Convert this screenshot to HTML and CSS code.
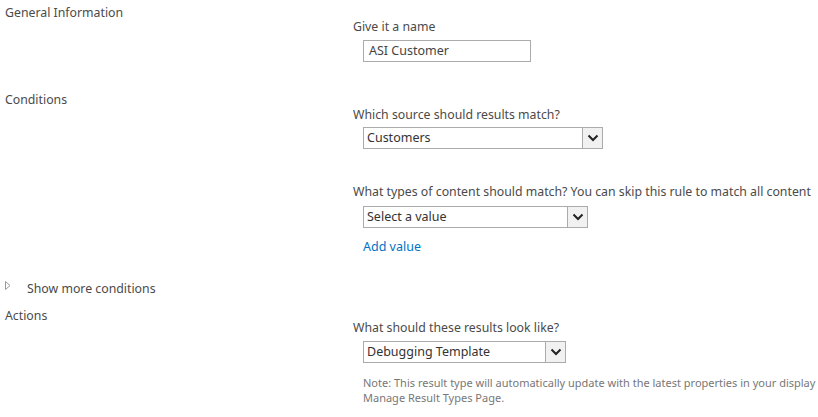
FILE: index.html
```html
<!DOCTYPE html>
<html>
<head>
<meta charset="utf-8">
<link rel="stylesheet" href="styles.css">
</head>
<body>
<div class="page">
  <section class="section sec-general">
    <div class="section-label">General Information</div>
    <div class="section-body">
      <div class="field">
        <div class="field-title">Give it a name</div>
        <div class="textbox">ASI Customer</div>
      </div>
    </div>
  </section>

  <section class="section sec-conditions">
    <div class="section-label">Conditions</div>
    <div class="section-body">
      <div class="field">
        <div class="field-title">Which source should results match?</div>
        <div class="select select-source"><span class="select-text">Customers</span><span class="select-btn"><svg width="12" height="8" viewBox="0 0 12 8"><polyline points="1.5,1.5 6,6 10.5,1.5" fill="none" stroke="#222" stroke-width="2"/></svg></span></div>
      </div>
      <div class="field field-types">
        <div class="field-title">What types of content should match? You can skip this rule to match all content</div>
        <div class="select select-types"><span class="select-text">Select a value</span><span class="select-btn"><svg width="12" height="8" viewBox="0 0 12 8"><polyline points="1.5,1.5 6,6 10.5,1.5" fill="none" stroke="#222" stroke-width="2"/></svg></span></div>
        <a class="add-link">Add value</a>
      </div>
    </div>
  </section>

  <div class="more-row">
    <svg class="tri" width="6" height="9" viewBox="0 0 6 9"><polygon points="0.5,0.5 5,4.5 0.5,8.5" fill="none" stroke="#9a9a9a" stroke-width="1"/></svg>
    <span>Show more conditions</span>
  </div>

  <section class="section sec-actions">
    <div class="section-label">Actions</div>
    <div class="section-body">
      <div class="field">
        <div class="field-title">What should these results look like?</div>
        <div class="select select-template"><span class="select-text">Debugging Template</span><span class="select-btn"><svg width="12" height="8" viewBox="0 0 12 8"><polyline points="1.5,1.5 6,6 10.5,1.5" fill="none" stroke="#222" stroke-width="2"/></svg></span></div>
        <div class="note">Note: This result type will automatically update with the latest properties in your display<br>Manage Result Types Page.</div>
      </div>
    </div>
  </section>
</div>
</body>
</html>
```

FILE: styles.css
```css
html, body {
  margin: 0;
  padding: 0;
  background: #ffffff;
}
body {
  font-family: "Noto Sans", "Open Sans", sans-serif;
  font-size: 12.3px;
  color: #4a4a4a;
  overflow: hidden;
}
.page {
  width: 818px;
  white-space: nowrap;
}
.section {
  display: flex;
}
.section-label {
  width: 348px;
  padding-left: 5px;
  line-height: 16px;
  flex: none;
}
.section-body {
  flex: 1;
}
.field-title {
  line-height: 16px;
  color: #4a4a4a;
}
.sec-general {
  padding-top: 5px;
  height: 87px;
}
.sec-general .field {
  padding-top: 14px;
}
.textbox {
  margin-top: 5px;
  margin-left: 10px;
  width: 168px;
  height: 22px;
  box-sizing: border-box;
  border: 1px solid #ababab;
  padding-left: 5px;
  line-height: 20px;
  font-size: 12.5px;
  color: #444;
}
.sec-conditions {
  height: 188px;
}
.sec-conditions .field {
  padding-top: 15px;
}
.sec-conditions .field-types {
  padding-top: 35px;
}
.select {
  margin-left: 10px;
  height: 22px;
  box-sizing: border-box;
  border: 1px solid #ababab;
  display: flex;
  background: #fff;
}
.select-source {
  margin-top: 4px;
  width: 240px;
}
.select-types {
  margin-top: 6px;
  width: 225px;
}
.select-template {
  margin-top: 5px;
  width: 203px;
}
.select-text {
  flex: 1;
  padding-left: 3px;
  line-height: 20px;
  font-size: 12.5px;
  color: #333;
}
.select-btn {
  width: 19px;
  border-left: 1px solid #ababab;
  background: #f1f1f1;
  display: flex;
  align-items: center;
  justify-content: center;
}
.add-link {
  display: block;
  margin-top: 11px;
  margin-left: 10px;
  line-height: 16px;
  font-size: 12.5px;
  color: #0072c6;
}
.more-row {
  display: flex;
  align-items: center;
  height: 16px;
  padding-left: 5px;
}
.more-row .tri {
  margin-top: -5px;
}
.more-row span {
  margin-left: 16px;
  color: #4a4a4a;
}
.sec-actions {
  margin-top: 12px;
}
.sec-actions .field {
  padding-top: 12px;
}
.note {
  margin-top: 12px;
  margin-left: 10px;
  font-size: 11px;
  line-height: 15px;
  color: #777777;
}
```
